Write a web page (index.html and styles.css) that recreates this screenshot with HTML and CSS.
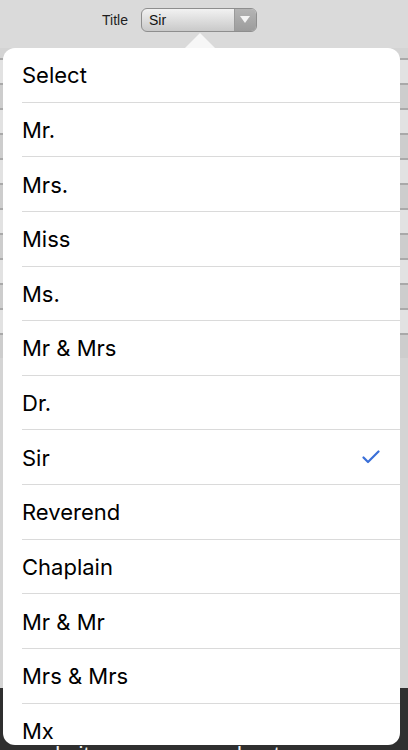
FILE: index.html
```html
<!DOCTYPE html>
<html>
<head>
<meta charset="utf-8">
<link rel="stylesheet" href="styles.css">
</head>
<body>
<div class="page">
  <div class="topbar">
    <span class="label">Title</span>
    <div class="select">
      <span class="select-value">Sir</span>
      <span class="select-btn"><span class="tri"></span></span>
    </div>
  </div>
  <div class="bg-rows">
    <div class="bg-row"></div><div class="bg-row"></div><div class="bg-row"></div>
    <div class="bg-row"></div><div class="bg-row"></div><div class="bg-row"></div>
    <div class="bg-row"></div><div class="bg-row"></div><div class="bg-row"></div>
    <div class="bg-row"></div><div class="bg-row"></div><div class="bg-row"></div>
  </div>
  <div class="footer">
    <span class="foot-a">Other websites</span>
    <span class="foot-b">about us</span>
  </div>

  <div class="pop-arrow"></div>
  <div class="popover">
    <div class="item"><span>Select</span></div>
    <div class="item"><span>Mr.</span></div>
    <div class="item"><span>Mrs.</span></div>
    <div class="item"><span>Miss</span></div>
    <div class="item"><span>Ms.</span></div>
    <div class="item"><span>Mr &amp; Mrs</span></div>
    <div class="item"><span>Dr.</span></div>
    <div class="item"><span>Sir</span>
      <svg class="check" width="18" height="14" viewBox="0 0 18 14"><path d="M1.5 7.5 L6 12 L16.5 1.5" fill="none" stroke="#3a6fd8" stroke-width="2.2" stroke-linecap="round" stroke-linejoin="round"/></svg>
    </div>
    <div class="item"><span>Reverend</span></div>
    <div class="item"><span>Chaplain</span></div>
    <div class="item"><span>Mr &amp; Mr</span></div>
    <div class="item"><span>Mrs &amp; Mrs</span></div>
    <div class="item last"><span>Mx</span></div>
  </div>
</div>
</body>
</html>
```
FILE: styles.css
```css
* { box-sizing: border-box; }
html, body { margin: 0; padding: 0; }
body { font-family: "Liberation Sans", Arial, sans-serif; }
.page {
  position: relative;
  width: 408px;
  height: 750px;
  overflow: hidden;
  background: #d9d9d9;
  display: flex;
  flex-direction: column;
}
.topbar {
  height: 48px;
  display: flex;
  align-items: flex-start;
  padding: 8px 0 0 102px;
  gap: 13px;
  background: #dadada;
}
.label {
  font-size: 14px;
  color: #1e1e1e;
  line-height: 24px;
}
.select {
  width: 116px;
  height: 24px;
  border: 1px solid #8e8e8e;
  border-radius: 6px;
  display: flex;
  overflow: hidden;
  background: linear-gradient(#f2f2f2, #c9c9c9);
}
.select-value {
  flex: 1;
  font-size: 14px;
  line-height: 22px;
  padding-left: 7px;
  color: #111;
}
.select-btn {
  width: 22px;
  background: linear-gradient(#b4b4b4, #9c9c9c);
  border-left: 1px solid #9a9a9a;
  display: flex;
  align-items: center;
  justify-content: center;
}
.tri {
  width: 0; height: 0;
  border-left: 5px solid transparent;
  border-right: 5px solid transparent;
  border-top: 7px solid #f4f4f4;
  margin-top: -2px;
}
.bg-rows {
  flex: 1;
  display: flex;
  flex-direction: column;
  padding-top: 10px;
  background: #d4d4d4;
}
.bg-row {
  height: 25px;
  border-top: 2px solid #a9a9a9;
  background: #e2e2e2;
}
.bg-row:nth-child(even) { background: #cdcdcd; }
.footer {
  height: 62px;
  background: #2f2f2f;
  display: flex;
  align-items: flex-end;
  color: #f0f0f0;
  font-size: 22px;
  line-height: 22px;
}
.foot-a { margin-left: -34px; margin-bottom: -16px; }
.foot-b { margin-left: 112px; margin-bottom: -16px; }
.pop-arrow {
  position: absolute;
  left: 184px;
  top: 33px;
  width: 0; height: 0;
  border-left: 16px solid transparent;
  border-right: 16px solid transparent;
  border-bottom: 16px solid #f7f7f7;
}
.popover {
  position: absolute;
  left: 3px;
  top: 48px;
  width: 397px;
  height: 697px;
  background: #fff;
  border-radius: 12px;
  overflow: hidden;
  padding-left: 19px;
}
.item {
  height: 54.64px;
  border-bottom: 1px solid #dadada;
  display: flex;
  align-items: center;
  justify-content: space-between;
  padding-right: 20px;
  font-family: Inter, "Liberation Sans", sans-serif;
  font-size: 22px;
  color: #000;
}
.item span { margin-top: 1px; }
.item.last { border-bottom: none; }
.check { display: block; }
```
